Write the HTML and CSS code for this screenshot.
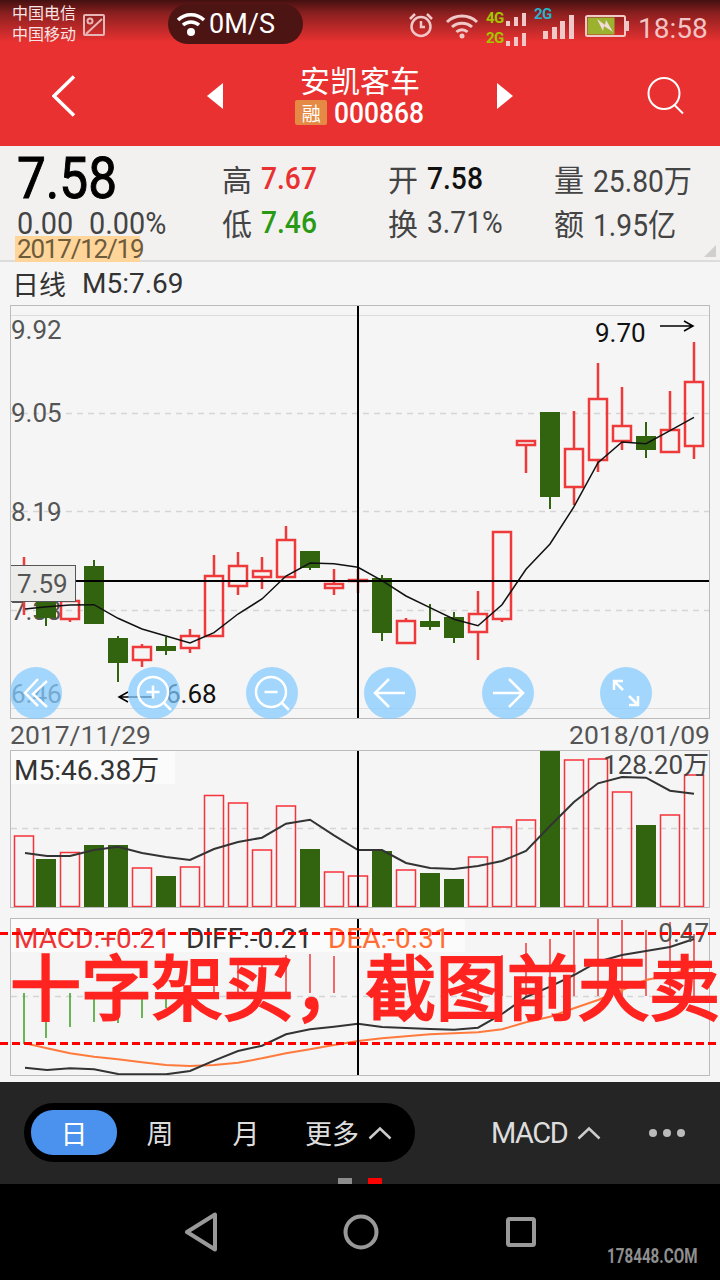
FILE: index.html
```html
<!DOCTYPE html>
<html lang="zh-CN">
<head>
<meta charset="UTF-8" />
<title>安凯客车 000868</title>
<link rel="stylesheet" href="styles.css">
</head>
<body>

<header class="topbar">
  <div class="statusbar">
    <div class="carriers"><span>中国电信</span><span>中国移动</span></div>
    <svg class="pic-icon" width="22" height="22" viewBox="0 0 22 22"><rect x="1" y="1" width="20" height="20" rx="1" /><circle cx="7" cy="7" r="2.500" /><path d="M3 20 19 5" /></svg>
    <div class="speed">
      <svg width="30" height="28" viewBox="0 0 30 28"><path d="M2 10a19 19 0 0 1 26 0M7 15a12 12 0 0 1 16 0" /><circle cx="15" cy="22" r="4" /></svg>
      <span>0M/S</span>
    </div>
    <div class="status-right">
      <svg class="st-alarm" width="26" height="26" viewBox="0 0 26 26"><circle cx="13" cy="14.500" r="9.500" /><path d="M13 9v6h4M2 7l5-5M24 7l-5-5" /></svg>
      <svg class="st-wifi" width="34" height="26" viewBox="0 0 34 26"><path d="M2 9a22 22 0 0 1 30 0M7 14a15 15 0 0 1 20 0M11.500 19a8 8 0 0 1 11 0" /><circle cx="17" cy="23" r="2.500" /></svg>
      <div class="sim">
        <div class="sim-row"><b class="net-green">4G</b><i class="bars"><u class="h1"></u><u class="h2"></u><u class="h3"></u></i></div>
        <div class="sim-row"><b class="net-green">2G</b><i class="bars"><u class="h1"></u><u class="h2"></u><u class="h3"></u></i></div>
      </div>
      <div class="sim2">
        <b class="net-blue">2G</b>
        <i class="bars big"><u class="h1"></u><u class="h2"></u><u class="h3"></u><u class="h4"></u></i>
      </div>
      <svg class="st-batt" width="44" height="22" viewBox="0 0 44 22"><rect x="1" y="1" width="39" height="20" rx="1.500" /><rect class="level" x="2.500" y="2.500" width="27" height="17" /><rect class="cap" x="41" y="6" width="3" height="10" /><path class="bolt" d="M12 4l8 6 1-5 7 12-9-6-1 5z" /></svg>
      <span class="clock">18:58</span>
    </div>
  </div>
  <nav class="navbar">
    <svg class="nav-back" width="24" height="42" viewBox="0 0 24 42"><path d="M22 1.500 2 21l20 19.500" /></svg>
    <span class="tri-left"></span>
    <div class="stock-title">
      <div class="stock-name">安凯客车</div>
      <div class="stock-code"><span class="badge">融</span><span class="code-num">000868</span></div>
    </div>
    <span class="tri-right"></span>
    <svg class="nav-search" width="38" height="38" viewBox="0 0 38 38"><circle cx="17" cy="16.500" r="15.500" /><path d="M27.500 28 36 36.500" /></svg>
  </nav>
</header>

<section class="quote">
  <div class="quote-main">
    <div class="price">7.58</div>
    <div class="change"><span>0.00</span><span>0.00%</span></div>
    <div class="date">2017/12/19</div>
  </div>
  <div class="quote-grid">
    <div class="cell"><span class="k">高</span><span class="val red">7.67</span></div>
    <div class="cell"><span class="k">开</span><span class="val black">7.58</span></div>
    <div class="cell"><span class="k">量</span><span class="val">25.80<span class="cjk">万</span></span></div>
    <div class="cell"><span class="k">低</span><span class="val green">7.46</span></div>
    <div class="cell"><span class="k">换</span><span class="val">3.71%</span></div>
    <div class="cell"><span class="k">额</span><span class="val">1.95<span class="cjk">亿</span></span></div>
  </div>
  <span class="corner"></span>
</section>

<main class="charts">
  <div class="chart-head"><span class="cjk-title">日线</span><span>M5:7.69</span></div>

  <div class="box box-kline">
    <svg width="698" height="412" viewBox="11 306 698 412">
      <path class="grid-solid" d="M11 315.500H709M11 708.500H709" />
      <path class="grid-dash" d="M11 413.500H709M11 511.500H709M11 610.500H709" />
      <text class="axis" x="11" y="339">9.92</text>
      <text class="axis" x="11" y="422">9.05</text>
      <text class="axis" x="11" y="521">8.19</text>
      <text class="axis" x="11" y="620">7.33</text>
      <text class="axis" x="11" y="703">6.46</text>

      <path class="wick-up" d="M24 557V615M70 620V622M142 644V646M142 661V667M190 629V635M190 649V653M214 555V575M238 552V565M238 587V595M262 557V570M262 578V589M286 526V539M334 569V583M334 589V595M358 569V593M406 618V620M478 591V613M478 633V660M502 620V622M526 446V473M574 411V448M574 488V505M598 363V398M598 461V472M622 387V425M622 442V450M670 391V429M694 342V381M694 447V459" />
      <path class="wick-down" d="M46 618V626M94 560V566M118 636V638M118 663V682M166 637V655M310 568V570M382 575V641M430 604V630M454 612V643M550 497V509M646 422V458" />
      <g class="body-up">
        <rect x="61" y="601" width="18" height="18" />
        <rect x="133" y="647" width="18" height="13" />
        <rect x="181" y="636" width="18" height="12" />
        <rect x="205" y="576" width="18" height="60" />
        <rect x="229" y="566" width="18" height="20" />
        <rect x="253" y="571" width="18" height="6" />
        <rect x="277" y="540" width="18" height="37" />
        <rect x="325" y="584" width="18" height="4" />
        <rect x="349" y="580" width="18" height="1" />
        <rect x="397" y="621" width="18" height="22" />
        <rect x="469" y="614" width="18" height="18" />
        <rect x="493" y="532" width="18" height="87" />
        <rect x="517" y="441" width="18" height="4" />
        <rect x="565" y="449" width="18" height="38" />
        <rect x="589" y="399" width="18" height="61" />
        <rect x="613" y="426" width="18" height="15" />
        <rect x="661" y="430" width="18" height="22" />
        <rect x="685" y="382" width="18" height="64" />
      </g>
      <g class="body-down">
        <rect x="36" y="602" width="20" height="16" />
        <rect x="84" y="566" width="20" height="58" />
        <rect x="108" y="638" width="20" height="25" />
        <rect x="156" y="646" width="20" height="5" />
        <rect x="300" y="551" width="20" height="17" />
        <rect x="372" y="578" width="20" height="55" />
        <rect x="420" y="621" width="20" height="6" />
        <rect x="444" y="617" width="20" height="21" />
        <rect x="540" y="412" width="20" height="85" />
        <rect x="636" y="436" width="20" height="14" />
      </g>
      <polyline class="ma" points="25,609 47,606.700 70,605 94,604.700 118,618.300 142,629 166,636 190,643 214,632.700 238,614 262,599 286,576 310,563 334,563.700 358,567.300 382,580.700 406,596 430,607.700 454,619.300 478,625.700 502,604.700 526,569.300 550,544 574,506.700 598,462.700 622,442 646,443.700 670,430.700 694,417.300" />

      <path class="cross" d="M11 581H709M358 306V718" />
      <rect class="price-tag" x="10.500" y="565.500" width="65" height="36" />
      <text class="axis" x="17" y="593">7.59</text>

      <text class="extreme" x="595" y="342">9.70</text>
      <path class="arrow" d="M660 326H693M684 321l9 5-9 5" />
      <text class="extreme" x="166" y="703">6.68</text>
      <path class="arrow" d="M152 697H119M128 692l-9 5 9 5" />
    </svg>
    <div class="tools">
      <span class="tool"><svg viewBox="0 0 52 52"><path d="M28 12 15 26l13 13M37 14 23 27l14 13" /></svg></span>
      <span class="tool"><svg viewBox="0 0 52 52"><circle cx="25" cy="25" r="15" /><path d="M36 36l7 7M18.500 25h13M25 18.500v13" /></svg></span>
      <span class="tool"><svg viewBox="0 0 52 52"><circle cx="25" cy="25" r="15" /><path d="M36 36l7 7M18.500 25h13" /></svg></span>
      <span class="tool"><svg viewBox="0 0 52 52"><path d="M11 26H41M25 12 11 26l14 14" /></svg></span>
      <span class="tool"><svg viewBox="0 0 52 52"><path d="M11 26H41M27 12 41 26 27 40" /></svg></span>
      <span class="tool"><svg viewBox="0 0 52 52"><path d="M15 15l8 8M29 29l8 8M14 23v-9h9M38 29v9h-9" /></svg></span>
    </div>
  </div>

  <div class="date-row"><span>2017/11/29</span><span>2018/01/09</span></div>

  <div class="box box-volume">
    <svg width="698" height="156" viewBox="11 751 698 156">
      <rect class="legend-bg" x="11" y="751" width="164" height="33" />
      <path class="grid-dash" d="M11 828.500H709" />
      <text class="legend" x="14" y="780">M5:46.38万</text>
      <g class="vol-up">
        <rect x="14.500" y="836" width="19" height="70.500" />
        <rect x="60.500" y="852.500" width="19" height="54" />
        <rect x="132.500" y="868" width="19" height="38.500" />
        <rect x="180.500" y="867" width="19" height="39.500" />
        <rect x="204.500" y="795.500" width="19" height="111" />
        <rect x="228.500" y="803" width="19" height="103.500" />
        <rect x="252.500" y="850" width="19" height="56.500" />
        <rect x="276.500" y="806" width="19" height="100.500" />
        <rect x="324.500" y="872" width="19" height="34.500" />
        <rect x="348.500" y="876" width="19" height="30.500" />
        <rect x="396.500" y="870" width="19" height="36.500" />
        <rect x="468.500" y="857" width="19" height="49.500" />
        <rect x="492.500" y="827" width="19" height="79.500" />
        <rect x="516.500" y="820" width="19" height="86.500" />
        <rect x="564.500" y="760" width="19" height="146.500" />
        <rect x="588.500" y="759" width="19" height="147.500" />
        <rect x="612.500" y="792" width="19" height="114.500" />
        <rect x="660.500" y="815" width="19" height="91.500" />
        <rect x="684.500" y="775" width="19" height="131.500" />
      </g>
      <g class="body-down">
        <rect x="36" y="859" width="20" height="48" />
        <rect x="84" y="845" width="20" height="62" />
        <rect x="108" y="845" width="20" height="62" />
        <rect x="156" y="876" width="20" height="31" />
        <rect x="300" y="849" width="20" height="58" />
        <rect x="372" y="851" width="20" height="56" />
        <rect x="420" y="873" width="20" height="34" />
        <rect x="444" y="879" width="20" height="28" />
        <rect x="540" y="751" width="20" height="156" />
        <rect x="636" y="825" width="20" height="82" />
      </g>
      <polyline class="ma-vol" points="25,853 47,856 70,856 94,850 118,846.700 142,853 166,857 190,860 214,849 238,842 262,837.700 286,823.700 310,819.700 334,835.300 358,850 382,850 406,863 430,868 454,869 478,866 502,861 526,851 550,826 574,802 598,783.300 622,777 646,777.700 670,790.700 694,793.700" />
      <path class="cross" d="M358 751V907" />
      <text class="axis dark" x="709" y="774" text-anchor="end">128.20万</text>
    </svg>
  </div>

  <div class="box box-macd">
    <svg width="698" height="156" viewBox="11 919 698 156">
      <rect class="legend-bg" x="11" y="919" width="454" height="33" />
      <path class="grid-dash" d="M11 996.500H709" />
      <path class="hist-down" d="M24 993V1044M46 996V1038M70 993V1027M94 993V1022M118 996V1023M142 993V1018M166 993V1008" />
      <path class="hist-up" d="M214 972V996M238 963V996M262 958V996M286 955V993M310 954V993M334 956V993M478 975V996M502 955V996M526 943V996M550 939V996M574 930V996M598 919V996M622 920V996M646 930V996M670 922V996M694 934V996" />
      <polyline class="dea" points="25,1043.300 47,1048.300 70,1053.300 94,1056.700 118,1059.300 142,1062.300 166,1065 190,1066 214,1065 238,1062.700 262,1058.300 286,1053.300 310,1049.300 334,1045 358,1041 382,1038.300 406,1036.300 430,1034.300 454,1033.300 478,1032.300 502,1029.300 526,1022.300 550,1016.700 574,1008.300 598,1000 622,990 646,980 670,975 694,966.700" />
      <polyline class="diff" points="25,1067.700 47,1070 70,1068.300 94,1069.300 118,1074 142,1074.300 166,1074.300 190,1071 214,1060.700 238,1051 262,1045.700 286,1034.300 310,1029.300 334,1026.700 358,1023.700 382,1027 406,1028 430,1029 454,1029.700 478,1027.700 502,1014 526,997 550,986.700 574,975 598,961.700 622,955 646,951 670,947 694,939" />
      <path class="cross" d="M358 919V1075" />
      <text class="legend macd-red" x="14" y="948">MACD:+0.21</text>
      <text class="legend" x="186" y="948">DIFF:-0.21</text>
      <text class="legend macd-orange" x="328" y="948">DEA:-0.31</text>
      <text class="axis" x="709" y="942" text-anchor="end">0.47</text>
    </svg>
    <span class="mark-line mark-top"></span>
    <span class="mark-line mark-bottom"></span>
    <div class="mark-text">十字架买，截图前天卖</div>
  </div>
</main>

<section class="toolbar">
  <div class="periods">
    <span class="period active">日</span>
    <span class="period">周</span>
    <span class="period">月</span>
    <span class="period more">更多<svg width="24" height="14" viewBox="0 0 24 14"><path d="M1.500 12.500 12 2.500l10.500 10" /></svg></span>
  </div>
  <div class="indicator">MACD<svg width="24" height="14" viewBox="0 0 24 14"><path d="M1.500 12.500 12 2.500l10.500 10" /></svg></div>
  <div class="dots"><i></i><i></i><i></i></div>
  <div class="pager"><i></i><i class="on"></i></div>
</section>

<footer class="navkeys">
  <svg width="34" height="40" viewBox="0 0 34 40"><path d="M31 2.500V37.500L3 20z" /></svg>
  <svg width="36" height="36" viewBox="0 0 36 36"><circle cx="18" cy="18" r="15.500" /></svg>
  <svg class="key-recent" width="30" height="30" viewBox="0 0 30 30"><rect x="2" y="2" width="26" height="26" rx="1.500" /></svg>
  <span class="watermark">178448.COM</span>
</footer>

</body>
</html>
```

FILE: styles.css
```css
* {
  box-sizing: border-box;
}
html, body {
  margin: 0;
  padding: 0;
}
body {
  width: 720px;
  height: 1280px;
  overflow: hidden;
  background: #f5f5f5;
  font-family: Roboto, "Noto Sans CJK SC", sans-serif;
  color: #333;
}
svg {
  display: block;
  fill: none;
}

/* top red area */
.topbar {
  height: 146px;
  background: linear-gradient(#431010 0, #8e2020 14px, #e93131 42px);
}
.statusbar {
  height: 46px;
  display: flex;
  align-items: flex-start;
  padding: 2px 12px 0;
}
.carriers {
  display: flex;
  flex-direction: column;
  width: 71px;
  font: 16px/21px "Noto Sans CJK SC", sans-serif;
  color: #f7e4e4;
}
.pic-icon {
  margin-top: 12px;
  stroke: #e6b5b5;
  stroke-width: 2;
}
.speed {
  display: flex;
  align-items: center;
  gap: 3px;
  width: 135px;
  height: 40px;
  margin: 2px 0 0 63px;
  padding-left: 8px;
  border-radius: 20px;
  background: #4d1414;
  color: #fff;
  font-size: 27px;
}
.speed svg {
  stroke: #fff;
  stroke-width: 3.500;
}
.speed circle {
  fill: #fff;
  stroke: none;
}
.status-right {
  display: flex;
  align-items: flex-start;
  margin-left: 105px;
  color: #f2c4c4;
}
.st-alarm {
  margin-top: 10px;
  stroke: #f0c8c8;
  stroke-width: 2.500;
}
.st-wifi {
  margin: 11px 0 0 11px;
  stroke: #f0c8c8;
  stroke-width: 3;
}
.st-wifi circle {
  fill: #f0c8c8;
  stroke: none;
}
.sim {
  margin: 3px 0 0 7px;
  width: 41px;
}
.sim-row {
  display: flex;
  align-items: flex-end;
  height: 20px;
}
.sim b, .sim2 b {
  font: 700 15px/14px Roboto, sans-serif;
  letter-spacing: -0.5px;
}
.net-green {
  color: #a4c400;
}
.net-blue {
  color: #28b2cc;
}
.bars {
  display: flex;
  align-items: flex-end;
  gap: 4px;
}
.bars u {
  display: block;
  width: 4px;
  background: #f0c8c8;
}
.sim .bars {
  margin-bottom: -1px;
  margin-left: 2px;
}
.h1 { height: 5px; }
.h2 { height: 9px; }
.h3 { height: 13px; }
.h4 { height: 24px; }
.sim2 {
  position: relative;
  width: 39px;
  margin-left: 7px;
  height: 40px;
}
.sim2 b {
  position: absolute;
  left: 0;
  top: 5px;
}
.bars.big {
  position: absolute;
  left: 9px;
  top: 13px;
  height: 24px;
  gap: 3.500px;
  width: 34px;
}
.bars.big u {
  width: 5px;
}
.bars.big .h1 { height: 8px; }
.bars.big .h2 { height: 12px; }
.bars.big .h3 { height: 18px; }
.st-batt {
  margin: 13px 0 0 12px;
  stroke: #f0c8c8;
  stroke-width: 2;
}
.st-batt .level {
  fill: #9bb22f;
  stroke: none;
}
.st-batt .cap {
  fill: #f0c8c8;
  stroke: none;
}
.st-batt .bolt {
  fill: #f3dcdc;
  stroke: none;
}
.clock {
  margin: 9px 0 0 9px;
  font-size: 28px;
  line-height: 36px;
}
.navbar {
  height: 100px;
  display: flex;
  align-items: center;
  padding: 0 0 0 52px;
  color: #fff;
}
.nav-back {
  stroke: #fff;
  stroke-width: 3.500;
}
.tri-left, .tri-right {
  width: 0;
  height: 0;
  border-top: 13px solid transparent;
  border-bottom: 13px solid transparent;
}
.tri-left {
  margin-left: 131px;
  border-right: 16px solid #fff;
}
.tri-right {
  border-left: 16px solid #fff;
}
.stock-title {
  width: 274px;
  margin-top: -6px;
  text-align: center;
}
.stock-name {
  font: 30px/38px "Noto Sans CJK SC", sans-serif;
}
.stock-code {
  display: flex;
  align-items: center;
  justify-content: center;
  gap: 7px;
  height: 28px;
  font-size: 30px;
  font-weight: 500;
}
.code-num {
  margin-right: -12px;
  transform: scaleX(0.88);
  transform-origin: left;
}
.badge {
  width: 32px;
  height: 25px;
  background: #e58a44;
  border-radius: 2px;
  font: 400 19px/25px "Noto Sans CJK SC", sans-serif;
}
.nav-search {
  margin-left: 134px;
  stroke: #fff;
  stroke-width: 2;
}

/* quote panel */
.quote {
  position: relative;
  height: 116px;
  display: flex;
  background: #f2f1f0;
  border-bottom: 2px solid #dcdcdc;
}
.quote-main {
  width: 222px;
  padding-left: 17px;
}
.price {
  height: 62px;
  font-size: 57px;
  line-height: 66px;
  color: #000;
  -webkit-text-stroke: 1px #000;
  transform: scaleX(0.9);
  transform-origin: left;
}
.change {
  display: flex;
  gap: 17px;
  height: 28px;
  font-size: 31px;
  line-height: 32px;
  color: #444;
  transform: scaleX(0.93);
  transform-origin: left;
}
.date {
  width: 125px;
  height: 26px;
  margin-left: -2px;
  padding-left: 2px;
  background: #ffd59a;
  color: #6d5c3c;
  font-size: 26px;
  line-height: 27px;
  letter-spacing: -1.200px;
  white-space: nowrap;
}
.quote-grid {
  display: grid;
  grid-template-columns: 166px 166px 166px;
  grid-auto-rows: 44px;
  padding-top: 10px;
}
.cell {
  display: flex;
  align-items: center;
  gap: 9px;
  font-size: 31px;
  color: #444;
}
.k, .cjk {
  font-family: "Noto Sans CJK SC", sans-serif;
}
.k {
  font-size: 30px;
}
.val {
  transform: scaleX(0.91);
  transform-origin: left;
  white-space: nowrap;
}
.red { color: #e93131; font-weight: 500; }
.green { color: #2a9a14; font-weight: 500; }
.black { color: #111; font-weight: 500; }
.corner {
  position: absolute;
  right: 4px;
  bottom: 3px;
  width: 0;
  height: 0;
  border-left: 12px solid transparent;
  border-bottom: 12px solid #cfcfcf;
}

/* charts */
.charts {
  height: 820px;
}
.chart-head {
  height: 43px;
  display: flex;
  align-items: center;
  gap: 16px;
  padding-left: 12px;
  font-size: 28px;
  color: #333;
}
.cjk-title {
  font: 27px "Noto Sans CJK SC", sans-serif;
}
.box {
  position: relative;
  width: 700px;
  margin-left: 10px;
  border: 1px solid #bbb;
}
.box-kline {
  height: 414px;
}
.box-volume {
  height: 158px;
}
.box-macd {
  height: 158px;
  margin-top: 10px;
}
.date-row {
  height: 31px;
  display: flex;
  justify-content: space-between;
  padding: 0 10px;
  font-size: 26.500px;
  line-height: 31px;
  color: #555;
}
.grid-solid {
  stroke: #ddd;
  stroke-width: 1;
}
.grid-dash {
  stroke: #d5d5d5;
  stroke-width: 1.500;
  stroke-dasharray: 6 5;
}
.axis, .legend, .extreme {
  font-family: Roboto, "Noto Sans CJK SC", sans-serif;
  font-size: 26px;
  fill: #555;
}
.legend {
  font-size: 28px;
  fill: #333;
}
.axis.dark {
  fill: #444;
}
.extreme {
  fill: #111;
}
.macd-red {
  fill: #ee3535;
}
.macd-orange {
  fill: #ff6f35;
}
.wick-up {
  stroke: #ee3a3a;
  stroke-width: 2.500;
}
.wick-down {
  stroke: #326410;
  stroke-width: 2;
}
.body-up rect {
  fill: none;
  stroke: #ee3a3a;
  stroke-width: 2.500;
}
.body-down rect {
  fill: #326410;
}
.vol-up rect {
  fill: none;
  stroke: #f5333a;
  stroke-width: 1.500;
}
.ma {
  fill: none;
  stroke: #111;
  stroke-width: 1.500;
}
.ma-vol {
  fill: none;
  stroke: #333;
  stroke-width: 2;
}
.cross {
  stroke: #000;
  stroke-width: 2;
}
.price-tag {
  fill: #ececea;
  stroke: #555;
  stroke-width: 1;
}
.arrow {
  fill: none;
  stroke: #000;
  stroke-width: 1.500;
}
.legend-bg {
  fill: #fbfbfb;
}
.hist-down {
  stroke: #39a01e;
  stroke-width: 1.500;
}
.hist-up {
  stroke: #ee3a3a;
  stroke-width: 1.500;
}
.dea {
  fill: none;
  stroke: #ff7a3c;
  stroke-width: 2;
}
.diff {
  fill: none;
  stroke: #333;
  stroke-width: 2;
}

/* floating chart buttons */
.tools {
  position: absolute;
  left: -1px;
  top: 361px;
  display: flex;
  gap: 66px;
}
.tool {
  width: 52px;
  height: 52px;
  border-radius: 50%;
  background: rgba(130, 203, 255, 0.72);
}
.tool svg {
  width: 52px;
  height: 52px;
  stroke: #fff;
  stroke-width: 2.500;
}

/* hand-drawn notes over the macd chart */
.mark-line {
  position: absolute;
  left: -11px;
  width: 720px;
  height: 3px;
  background: repeating-linear-gradient(90deg, #f00 0 8px, transparent 8px 12px);
}
.mark-top {
  top: 13px;
}
.mark-bottom {
  top: 123px;
}
.mark-text {
  position: absolute;
  left: -1px;
  top: 24px;
  width: 720px;
  font: 400 71px/80px "Noto Sans CJK SC", sans-serif;
  -webkit-text-stroke: 2.500px #ff2420;
  color: #ff2420;
  white-space: nowrap;
}

/* bottom bar */
.toolbar {
  position: relative;
  height: 102px;
  background: #252525;
  color: #ddd;
}
.periods {
  position: absolute;
  left: 24px;
  top: 21px;
  width: 391px;
  height: 59px;
  display: flex;
  align-items: center;
  padding-left: 7px;
  border-radius: 30px;
  background: #000;
  font: 27px "Noto Sans CJK SC", sans-serif;
}
.period {
  width: 86px;
  height: 45px;
  line-height: 45px;
  text-align: center;
  border-radius: 22px;
}
.period.active {
  background: #4a92ee;
  color: #fff;
}
.period.more {
  display: flex;
  align-items: center;
  gap: 9px;
  width: auto;
  margin-left: 16px;
}
.period.more svg, .indicator svg {
  stroke: #ccc;
  stroke-width: 2.500;
}
.indicator {
  position: absolute;
  left: 491px;
  top: 30px;
  display: flex;
  align-items: center;
  gap: 10px;
  font-size: 29px;
  line-height: 42px;
  letter-spacing: -1.500px;
}
.dots {
  position: absolute;
  left: 649px;
  top: 47px;
  display: flex;
  gap: 6px;
}
.dots i {
  width: 8px;
  height: 8px;
  border-radius: 50%;
  background: #bbb;
}
.pager {
  position: absolute;
  left: 338px;
  bottom: 0;
  display: flex;
  gap: 16px;
}
.pager i {
  width: 14px;
  height: 6px;
  background: #8c8c8c;
}
.pager .on {
  background: #f00;
}

/* android keys */
.navkeys {
  position: relative;
  height: 96px;
  display: flex;
  align-items: center;
  padding: 0 0 0 184px;
  gap: 125px;
  background: #000;
}
.navkeys svg {
  stroke: #999;
  stroke-width: 4;
  stroke-linejoin: round;
}
.navkeys .key-recent {
  margin-left: 2px;
}
.watermark {
  position: absolute;
  left: 607px;
  top: 60px;
  font: 700 20px/24px Roboto, sans-serif;
  color: #8f8f8f;
  transform: scaleX(0.76);
  transform-origin: left;
}
```
